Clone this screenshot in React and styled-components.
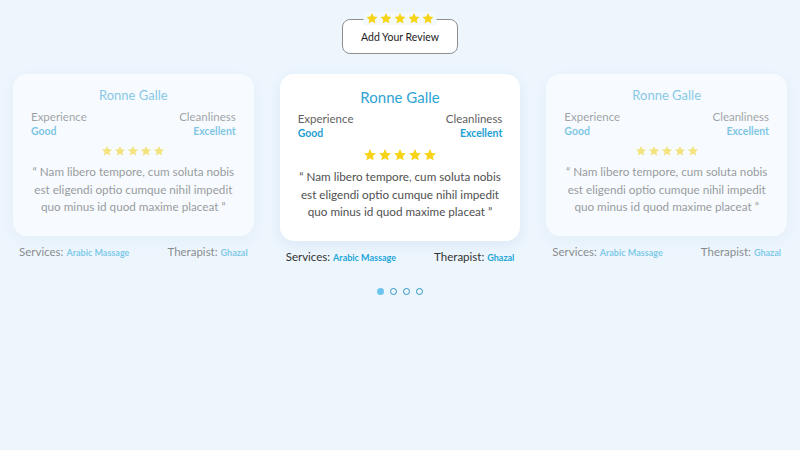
import React from 'react';
import styled, { createGlobalStyle } from 'styled-components';

const reviews = [
  { id: 1, name: 'Ronne Galle', experience: 'Good', cleanliness: 'Excellent', service: 'Arabic Massage', therapist: 'Ghazal' },
  { id: 2, name: 'Ronne Galle', experience: 'Good', cleanliness: 'Excellent', service: 'Arabic Massage', therapist: 'Ghazal' },
  { id: 3, name: 'Ronne Galle', experience: 'Good', cleanliness: 'Excellent', service: 'Arabic Massage', therapist: 'Ghazal' },
];

const Star = ({ size }) => (
  <svg width={size} height={size} viewBox="0 0 24 24">
    <path
      d="M12 1.8l3.1 6.6 7.1.8-5.3 4.9 1.4 7.1L12 17.6l-6.3 3.6 1.4-7.1-5.3-4.9 7.1-.8z"
      fill="#f7d417"
    />
  </svg>
);

const StarRow = ({ size }) => (
  <Stars>
    {[0, 1, 2, 3, 4].map((i) => (
      <Star key={i} size={size} />
    ))}
  </Stars>
);

const App = () => {
  const active = 1;

  return (
    <>
      <GlobalStyle />
      <Page>
        <ReviewButtonWrap>
          <ButtonStars>
            <StarRow size={13} />
          </ButtonStars>
          <ReviewButton>Add Your Review</ReviewButton>
        </ReviewButtonWrap>

        <Carousel>
          {reviews.map((r, i) => {
            const isActive = i === active;
            return (
              <Slot key={r.id} $active={isActive}>
                <Card $active={isActive}>
                  <Name $active={isActive}>{r.name}</Name>
                  <RatingRow>
                    <Rating>
                      <Label>Experience</Label>
                      <Value>{r.experience}</Value>
                    </Rating>
                    <Rating $right>
                      <Label>Cleanliness</Label>
                      <Value>{r.cleanliness}</Value>
                    </Rating>
                  </RatingRow>
                  <CardStars $active={isActive}>
                    <StarRow size={isActive ? 14 : 12} />
                  </CardStars>
                  <Quote>
                    “ Nam libero tempore, cum soluta nobis est eligendi optio cumque nihil impedit quo minus id quod maxime placeat ”
                  </Quote>
                </Card>
                <Meta>
                  <span>
                    Services: <Highlight>{r.service}</Highlight>
                  </span>
                  <span>
                    Therapist: <Highlight>{r.therapist}</Highlight>
                  </span>
                </Meta>
              </Slot>
            );
          })}
        </Carousel>

        <Dots>
          {[0, 1, 2, 3].map((i) => (
            <Dot key={i} $filled={i === 0} />
          ))}
        </Dots>
      </Page>
    </>
  );
};

export default App;

// Styled Components
const GlobalStyle = createGlobalStyle`
  html, body {
    margin: 0;
    background: #eef6fd;
    font-family: Lato, "Open Sans", sans-serif;
  }
`;

const Page = styled.div`
  width: 800px;
  height: 450px;
  padding-top: 19px;
  box-sizing: border-box;
`;

const ReviewButtonWrap = styled.div`
  position: relative;
  width: 116px;
  margin: 0 auto;
`;

const ButtonStars = styled.div`
  position: absolute;
  top: -7px;
  left: 50%;
  transform: translateX(-50%);
  padding: 0 2px;
  background: #f4f9fe;
`;

const ReviewButton = styled.button`
  display: block;
  width: 116px;
  height: 35px;
  padding-top: 2px;
  background: #fff;
  border: 1px solid #8e8e8e;
  border-radius: 8px;
  font-family: inherit;
  font-size: 10.5px;
  color: #222;
`;

const Stars = styled.div`
  display: flex;
  justify-content: center;
  gap: 1px;
`;

const Carousel = styled.div`
  display: flex;
  margin-top: 20px;
`;

const Slot = styled.div`
  flex: 1;
  padding: 0 13px;
  opacity: ${(p) => (p.$active ? 1 : 0.55)};
`;

const Card = styled.div`
  background: #fff;
  border-radius: 14px;
  padding: ${(p) => (p.$active ? '13px' : '12px')} 16px 20px;
  box-shadow: 0 4px 14px rgba(120, 170, 215, 0.18);
  text-align: center;
`;

const Name = styled.div`
  font-size: ${(p) => (p.$active ? '15px' : '13px')};
  line-height: ${(p) => (p.$active ? '20px' : '18px')};
  color: #2ea4d4;
  margin-bottom: ${(p) => (p.$active ? '5px' : '6px')};
`;

const RatingRow = styled.div`
  display: flex;
  justify-content: space-between;
  padding: 0 2px;
`;

const Rating = styled.div`
  display: flex;
  flex-direction: column;
  align-items: ${(p) => (p.$right ? 'flex-end' : 'flex-start')};
`;

const Label = styled.span`
  font-size: 11.5px;
  line-height: 14px;
  color: #5f5f5f;
`;

const Value = styled.span`
  font-size: 10.5px;
  line-height: 14px;
  font-weight: 700;
  color: #1fa0d2;
`;

const CardStars = styled.div`
  margin: ${(p) => (p.$active ? '8px 0 6px' : '7px 0 6px')};
  height: ${(p) => (p.$active ? '14px' : '12px')};
  display: flex;
  justify-content: center;
`;

const Quote = styled.p`
  margin: 0;
  font-size: 11.7px;
  line-height: 17.5px;
  color: #505050;
`;

const Meta = styled.div`
  display: flex;
  justify-content: space-between;
  padding: 0 6px;
  margin-top: 9px;
  font-size: 11.5px;
  line-height: 14px;
  color: #333;
`;

const Highlight = styled.span`
  font-size: 9px;
  font-weight: 700;
  color: #24a6d8;
`;

const Dots = styled.div`
  display: flex;
  justify-content: center;
  gap: 6px;
  margin-top: 23px;
`;

const Dot = styled.span`
  width: 7px;
  height: 7px;
  box-sizing: border-box;
  border-radius: 50%;
  background: ${(p) => (p.$filled ? '#6cc3ee' : 'transparent')};
  border: ${(p) => (p.$filled ? 'none' : '1.5px solid #2b98c2')};
`;
